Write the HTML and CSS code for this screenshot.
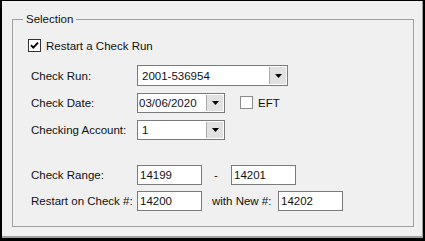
FILE: index.html
```html
<!DOCTYPE html>
<html>
<head>
<meta charset="utf-8">
<link rel="stylesheet" href="styles.css">
</head>
<body>
<div class="window">
  <fieldset class="group">
    <legend class="legend">Selection</legend>
    <div class="check-row">
      <span class="cb cb-dark"><svg width="11" height="11" viewBox="0 0 11 11"><path d="M2 5.2 L4.3 7.6 L9 2.6" fill="none" stroke="#000" stroke-width="1.8"/></svg></span>
      <span class="cb-text">Restart a Check Run</span>
    </div>
    <div class="row row-first">
      <span class="lbl">Check Run:</span>
      <div class="combo combo-wide"><span class="val">2001-536954</span><span class="btn"><svg width="7" height="4" viewBox="0 0 7 4"><polygon points="0,0 7,0 3.5,4" fill="#000"/></svg></span></div>
    </div>
    <div class="row">
      <span class="lbl">Check Date:</span>
      <div class="combo combo-narrow"><span class="val val-date">03/06/2020</span><span class="btn"><svg width="7" height="4" viewBox="0 0 7 4"><polygon points="0,0 7,0 3.5,4" fill="#000"/></svg></span></div>
      <span class="cb cb-light eft"></span>
      <span class="cb-text">EFT</span>
    </div>
    <div class="row">
      <span class="lbl">Checking Account:</span>
      <div class="combo combo-narrow"><span class="val">1</span><span class="btn"><svg width="7" height="4" viewBox="0 0 7 4"><polygon points="0,0 7,0 3.5,4" fill="#000"/></svg></span></div>
    </div>
    <div class="row row-range">
      <span class="lbl">Check Range:</span>
      <div class="box">14199</div>
      <span class="dash">-</span>
      <div class="box">14201</div>
    </div>
    <div class="row row-restart">
      <span class="lbl">Restart on Check #:</span>
      <div class="box">14200</div>
      <span class="with">with New #:</span>
      <div class="box">14202</div>
    </div>
  </fieldset>
</div>
</body>
</html>
```
FILE: styles.css
```css
* { box-sizing: border-box; }
html, body { margin: 0; padding: 0; }
body {
  width: 425px;
  height: 241px;
  font-family: "Liberation Sans", Arial, sans-serif;
  font-size: 11px;
  color: #111;
  background: #000;
}
.window {
  width: 425px;
  height: 241px;
  background: #f0f0f0;
  border-style: solid;
  border-color: #000;
  border-width: 1px 2px 3px 2px;
  box-shadow: inset -1px -2px 0 #a0a0a0;
  display: flex;
  flex-direction: column;
  padding: 11px 9px 11px 10px;
}
.group {
  flex: 1;
  margin: 0;
  min-inline-size: 0;
  border: 1px solid #a0a0a0;
  padding: 13px 0 0 15px;
}
.legend {
  margin-left: -5px;
  padding: 0 3px;
  line-height: 14px;
  font-size: 11.5px;
}
.check-row {
  display: flex;
  align-items: center;
  height: 13px;
  margin-top: 0;
}
.cb {
  width: 13px;
  height: 13px;
  background: #fff;
  display: inline-flex;
  align-items: center;
  justify-content: center;
  flex: none;
}
.cb-dark { border: 1px solid #333; }
.cb-light { border: 1px solid #8c8c8c; }
.cb-text {
  margin-left: 5px;
  font-size: 11.5px;
}
.row {
  display: flex;
  align-items: center;
  height: 21px;
  margin-top: 6px;
}
.row-first { margin-top: 13px; }
.row-range { margin-top: 25px; height: 20px; }
.row-restart { height: 21px; margin-top: 5px; }
.lbl {
  width: 106px;
  margin-left: 3px;
  flex: none;
  font-size: 11.5px;
}
.combo {
  height: 21px;
  background: #fff;
  border: 1px solid #7a7a7a;
  display: flex;
  align-items: stretch;
}
.combo-wide { width: 151px; }
.combo-narrow { width: 88px; height: 20px; }
.val {
  flex: 1;
  padding-left: 4px;
  display: flex;
  align-items: center;
  font-size: 11.5px;
}
.val-date { padding-left: 1px; }
.btn {
  width: 17px;
  margin: 1px;
  background: #e1e1e1;
  border-left: 1px solid #adadad;
  display: flex;
  align-items: center;
  justify-content: center;
  padding-top: 1px;
}
.eft { margin-left: 15px; }
.box {
  width: 65px;
  height: 20px;
  background: #fff;
  border: 1px solid #7a7a7a;
  padding-left: 2px;
  display: flex;
  align-items: center;
  font-size: 11.5px;
}
.dash {
  width: 29px;
  padding-left: 12px;
  font-size: 11.5px;
}
.with {
  width: 76px;
  padding-left: 10px;
  font-size: 11.5px;
}
```
